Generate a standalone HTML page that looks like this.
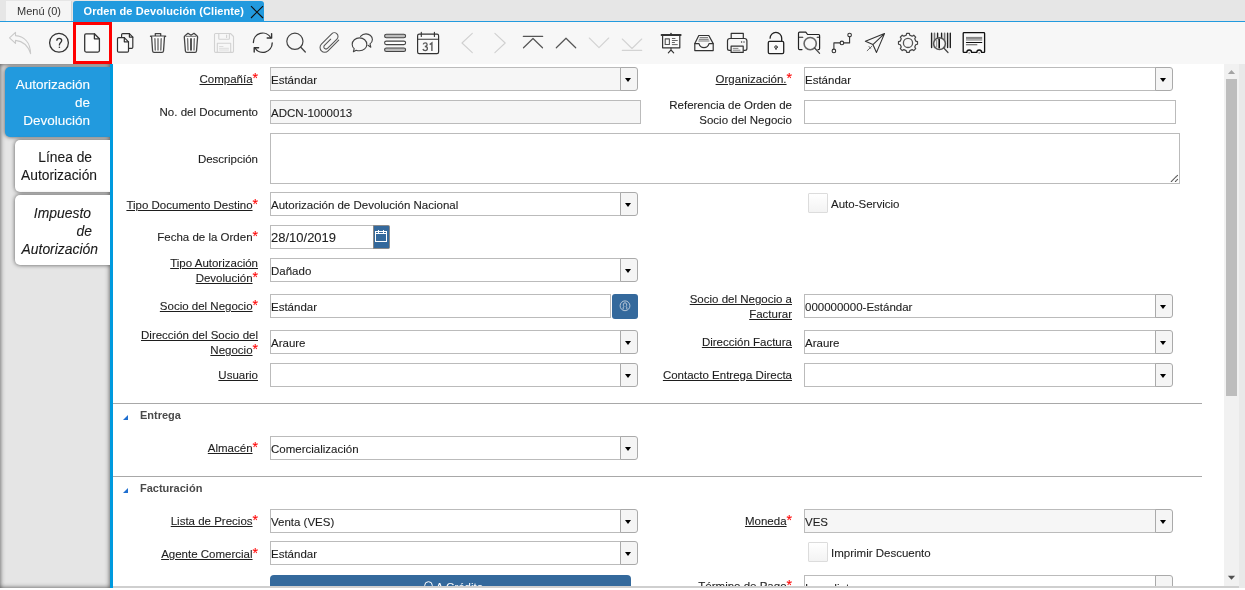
<!DOCTYPE html>
<html><head><meta charset="utf-8">
<style>
*{box-sizing:border-box}
html,body{margin:0;padding:0}
body{width:1245px;height:590px;position:relative;overflow:hidden;background:#fff;font-family:"Liberation Sans",sans-serif;color:#333}
.a{position:absolute}
#tabbar{left:0;top:0;width:1245px;height:21px;background:#e6e6e6}
#menutab{left:6px;top:1px;width:66px;height:20px;background:#f5f5f5;border-right:1px solid #d6d6d6;font-size:11px;color:#333;line-height:20px;padding-left:11px}
#acttab{left:73px;top:1px;width:191px;height:20px;background:#229ade;border-radius:3px 3px 0 0;font-size:11px;font-weight:bold;color:#fff;line-height:20px;padding-left:10.5px;letter-spacing:0.1px}
#blueline{left:0;top:21px;width:1245px;height:1px;background:#229ade}
#toolbar{left:0;top:22px;width:1245px;height:42px;background:#f7f7f7}
#redbox{left:73px;top:22px;width:39px;height:42px;border:3px solid #ff0000}
#leftp{left:0;top:64px;width:110px;height:524px;background:#e5e5e5;box-shadow:inset 0 0 5px #4a4a4a;overflow:hidden}
.ltab{position:absolute;border-radius:5px 0 0 5px;box-shadow:0 0 4px #555;font-size:13.5px;line-height:18px;-webkit-text-stroke:0.1px currentColor}
.ltab span{position:absolute;white-space:nowrap}
#vline{left:110px;top:64px;width:3px;height:524px;background:#009ade}
#bshadow{left:113px;top:586px;width:1126px;height:2px;background:#cfcfcf}
#sb{left:1224px;top:64px;width:15px;height:522px;background:#f1f1f1}
#sbr{left:1239px;top:64px;width:6px;height:524px;background:#e9e9e9}
#thumb{left:1226px;top:79px;width:11px;height:317px;background:#bdbdbd}
.lbl{position:absolute;white-space:nowrap;font-size:11.5px;color:#1e1e1e;-webkit-text-stroke:0.1px #1e1e1e;text-align:right;line-height:15px}
.u{text-decoration:underline;text-underline-offset:1px}
.req{color:#f00;-webkit-text-stroke:0.1px #f00;font-size:14px;position:relative;top:0;line-height:10px}
.fld{position:absolute;border:1px solid #bbb;background:#fff;font-size:11.5px;color:#1e1e1e;-webkit-text-stroke:0.1px #1e1e1e;padding-left:0px;white-space:nowrap;overflow:hidden}
.ro{background:#f6f6f6}
.btn{position:absolute;border:1px solid #aaa;border-left:1px solid #aaa;background:#f5f5f5;border-radius:0 3px 3px 0}
.btn i{position:absolute;left:4px;top:10px;width:0;height:0;border-left:3.5px solid transparent;border-right:3.5px solid transparent;border-top:4px solid #000}
.sep{position:absolute;height:1px;background:#a8a8a8}
.grp{position:absolute;font-size:11px;font-weight:bold;color:#4a4a4a}
.tri{position:absolute;width:0;height:0;border-left:5px solid transparent;border-bottom:5px solid #1f6fd0}
.chk{position:absolute;width:20px;height:20px;border:1px solid #dcdcdc;border-radius:1px;background:linear-gradient(#fff,#f3f3f3)}
</style></head><body>
<div id="root" style="position:absolute;left:0;top:0;width:1245px;height:590px;will-change:transform">
<div id="tabbar" class="a"></div>
<div id="menutab" class="a">Menú (0)</div>
<div id="acttab" class="a">Orden de Devolución (Cliente)</div>
<div id="blueline" class="a"></div>
<div id="toolbar" class="a"></div>
<svg class="a" style="left:0;top:0" width="1245" height="64" viewBox="0 0 1245 64">
<g fill="none" stroke-linecap="round" stroke-linejoin="round">
<!-- undo (disabled) -->
<path d="M9.5,37.8 L15.5,32.3 L15.5,35.6 C23.5,36.2 30.2,41.5 30.6,53.6 C28.2,46 22.5,41.2 15.5,40.4 L15.5,43.4 Z" stroke="#c9c9c9" stroke-width="1.1"/>
<!-- help -->
<circle cx="59" cy="42.8" r="9.4" stroke="#333" stroke-width="1.3"/>
<path d="M56.8,40.8 C56.8,39.1 57.9,38.4 59.2,38.4 C60.6,38.4 61.7,39.3 61.7,40.6 C61.7,42.4 59.4,42.7 59.4,44.9 L59.4,45.5" stroke="#333" stroke-width="1.3" stroke-linecap="butt"/>
<circle cx="59.4" cy="47.2" r="0.8" fill="#333"/>
<!-- new -->
<path d="M86,33.8 H94.4 L99.4,38.8 V50.6 Q99.4,52.1 97.9,52.1 H86.2 Q84.7,52.1 84.7,50.6 V35.2 Q84.7,33.8 86,33.8 Z" stroke="#333" stroke-width="1.3" fill="#fcfcfc"/>
<path d="M94.4,33.8 V38.8 H99.4" stroke="#333" stroke-width="1.3"/>
<!-- copy -->
<path d="M121.6,36.6 V34.8 Q121.6,33.7 122.7,33.7 H129.4 L132.8,37.1 V47.3 Q132.8,48.4 131.7,48.4 H129.2" stroke="#333" stroke-width="1.2"/>
<path d="M129.4,33.7 V37.1 H132.8" stroke="#333" stroke-width="1.2"/>
<path d="M118.7,37.6 H124.3 L128.5,41.8 V51 Q128.5,52.2 127.3,52.2 H118.7 Q117.5,52.2 117.5,51 V38.8 Q117.5,37.6 118.7,37.6 Z" stroke="#333" stroke-width="1.2" fill="#fcfcfc"/>
<path d="M124.3,37.6 V41.8 H128.5" stroke="#333" stroke-width="1.2"/>
<!-- trash -->
<path d="M150.5,36.3 H165.6" stroke="#444" stroke-width="1.4"/>
<path d="M155.3,36 V33.6 H160.7 V36" stroke="#444" stroke-width="1.3"/>
<path d="M151.6,36.6 L152.6,51 Q152.8,52.3 154,52.3 H162.1 Q163.3,52.3 163.5,51 L164.5,36.6" stroke="#444" stroke-width="1.3" fill="#fcfcfc"/>
<path d="M154.9,38.8 L155.3,50 M158,38.8 V50 M161.2,38.8 L160.8,50" stroke="#777" stroke-width="1.5"/>
<!-- trash 2 -->
<path d="M184.3,37 L185.4,51 Q185.6,52.3 186.8,52.3 H195.1 Q196.3,52.3 196.5,51 L197.6,37 Q197.6,36 196.6,35.6 L194,33.3 L191,35.3 L188,33.3 L185.3,35.6 Q184.3,36 184.3,37 Z" stroke="#444" stroke-width="1.3" fill="#fcfcfc"/>
<path d="M186,36.3 H196" stroke="#888" stroke-width="1.2"/>
<path d="M187.6,38.8 L188,50 M191,38.8 V50 M194.3,38.8 L194,50" stroke="#777" stroke-width="1.4"/>
<path d="M191,38.8 V50" stroke="#222" stroke-width="1.2"/>
<!-- save disabled -->
<path d="M215.6,33.5 H230.5 L233.5,36.5 V51.3 Q233.5,52.4 232.4,52.4 H215.6 Q214.5,52.4 214.5,51.3 V34.6 Q214.5,33.5 215.6,33.5 Z" stroke="#d2d2d2" stroke-width="1.1"/>
<path d="M218.8,33.5 V38.5 Q218.8,39.3 219.6,39.3 H228.6 Q229.4,39.3 229.4,38.5 V33.5 M226.6,35 V37.4" stroke="#d2d2d2" stroke-width="1.1"/>
<path d="M217.3,52.4 V43.3 H230.7 V52.4" stroke="#d2d2d2" stroke-width="1.1"/>
<path d="M219.5,46.5 H223 M219.5,48.3 H228.5 M219.5,50 H228.5" stroke="#dcdcdc" stroke-width="1"/>
<!-- refresh -->
<path d="M253.4,42.6 A9.3,9.3 0 0 1 270.8,37.8" stroke="#333" stroke-width="1.3"/>
<path d="M271.6,33.6 V38 H267.2" stroke="#333" stroke-width="1.4"/>
<path d="M272.2,43 A9.3,9.3 0 0 1 254.8,47.6" stroke="#333" stroke-width="1.3"/>
<path d="M254.2,52 V47.8 H258.6" stroke="#333" stroke-width="1.4"/>
<!-- search -->
<circle cx="294.9" cy="41.3" r="8.1" stroke="#444" stroke-width="1.2"/>
<path d="M300.8,47.2 L305.3,52" stroke="#444" stroke-width="1.3"/>
<!-- paperclip -->
<g transform="translate(328.8,42.4) rotate(45)"><path d="M5.4,-8.6 V6.45 A4.7,4.7 0 0 1 -4,6.45 V-8.1 A3.7,3.7 0 0 1 3.4,-8.1 V5.2 A2.15,2.15 0 0 1 -0.9,5.2 V-3.6" stroke="#555" stroke-width="1.05"/></g>
<!-- chat -->
<path d="M360.5,36.4 C362,34.7 364,33.9 366,33.9 C369.5,33.9 372.4,36.4 372.4,39.5 C372.4,41.3 371.5,42.8 370,43.9 L370.8,47.2 L368,45.3" stroke="#444" stroke-width="1.1"/>
<path d="M354.2,48.6 C352.8,47.4 352.2,46 352.2,44.4 C352.2,40.7 355.5,37.9 359.5,37.9 C363.6,37.9 366.8,40.7 366.8,44.4 C366.8,48 363.6,50.8 359.5,50.8 C358.3,50.8 357.2,50.6 356.2,50.2 L353.4,51.7 Z" stroke="#444" stroke-width="1.1" fill="#f9f9f9"/>
<!-- list -->
<rect x="384.6" y="34.3" width="21" height="3.5" rx="1.75" stroke="#444" stroke-width="1.1" fill="#bdbdbd"/>
<rect x="384.6" y="41.1" width="21" height="3.5" rx="1.75" stroke="#444" stroke-width="1.1" fill="#fff"/>
<rect x="384.6" y="48" width="21" height="3.5" rx="1.75" stroke="#444" stroke-width="1.1" fill="#bdbdbd"/>
<!-- calendar -->
<rect x="417.6" y="34.2" width="21" height="19.4" rx="1.6" stroke="#333" stroke-width="1.2" fill="#fafafa"/>
<path d="M417.6,39.2 H438.6" stroke="#333" stroke-width="1.1"/>
<path d="M421.3,32.2 V36.4 M434.4,32.2 V36.4" stroke="#333" stroke-width="1.1"/>
<!-- prev/next disabled -->
<path d="M472.3,33.3 L462,43 L472.3,52.6" stroke="#d0d0d0" stroke-width="1.1"/>
<path d="M494.9,33.3 L505.2,43 L494.9,52.6" stroke="#d0d0d0" stroke-width="1.1"/>
<!-- first -->
<path d="M523.3,36.3 H542.7" stroke="#555" stroke-width="1.2"/>
<path d="M523.5,47.8 L533,38.5 L542.5,47.8" stroke="#555" stroke-width="1.2"/>
<!-- up -->
<path d="M556.3,47.8 L566,38.2 L575.7,47.8" stroke="#555" stroke-width="1.2"/>
<!-- down disabled -->
<path d="M589.3,38 L599,47.6 L608.7,38" stroke="#d3d3d3" stroke-width="1.1"/>
<!-- last disabled -->
<path d="M622.3,39 L632,48.5 L641.7,39 M622.3,50.4 H641.7" stroke="#d3d3d3" stroke-width="1.1"/>
<!-- report -->
<path d="M661.6,35 H680.6" stroke="#333" stroke-width="2"/>
<circle cx="671" cy="33.6" r="0.8" fill="#333"/>
<path d="M662.6,36 V47.8 H679.8 V36" stroke="#333" stroke-width="1.2" fill="#fafafa"/>
<rect x="665.2" y="38.9" width="4.2" height="5.6" stroke="#555" stroke-width="1.1"/>
<path d="M672.3,38.5 H675 M672.3,40.5 H677.3 M672.3,42.5 H674.5 M672.3,44.6 H677.3" stroke="#555" stroke-width="0.9"/>
<path d="M671,48 V50 M671,50 L668.3,52.8 M671,50 L673.7,52.8" stroke="#333" stroke-width="1.1"/>
<!-- inbox -->
<path d="M694.8,43.6 L698.8,35.5 H708.8 L713.2,43.6" stroke="#333" stroke-width="1.2"/>
<path d="M694.8,43.6 V50.6 H713.2 V43.6 H709 Q708,47.6 704,47.6 Q700,47.6 699,43.6 Z" stroke="#333" stroke-width="1.2" fill="#fafafa"/>
<path d="M700,37.6 H707.6 M699.3,39.3 H708.3 M698.8,41 H709" stroke="#666" stroke-width="0.9"/>
<!-- printer -->
<path d="M731.2,38.4 V33.4 H743.3 V38.4" stroke="#333" stroke-width="1.2"/>
<path d="M730.6,50.4 H729.4 Q727.5,50.4 727.5,48.5 V40.8 Q727.5,38.5 729.8,38.5 H744.6 Q746.9,38.5 746.9,40.8 V48.5 Q746.9,50.4 745,50.4 H743.8" stroke="#333" stroke-width="1.2"/>
<rect x="731.1" y="46.2" width="12.1" height="6.2" stroke="#333" stroke-width="1.2" fill="#fafafa"/>
<path d="M733.2,48.4 H738 M733.2,50.2 H740" stroke="#777" stroke-width="0.9"/>
<circle cx="741.6" cy="42" r="0.7" fill="#333"/><circle cx="744" cy="42" r="0.7" fill="#333"/>
<!-- lock -->
<path d="M770.1,38.2 A5.8,5.8 0 0 1 781.7,38.2 V41.3" stroke="#222" stroke-width="1.3"/>
<rect x="768.3" y="41.4" width="15.4" height="12.2" rx="1.3" stroke="#222" stroke-width="1.3" fill="#fafafa"/>
<circle cx="776" cy="47.1" r="1.3" stroke="#333" stroke-width="1"/>
<path d="M776,48.4 V49.6" stroke="#333" stroke-width="1"/>
<!-- folder search -->
<path d="M802,49.6 H799.6 Q798.5,49.6 798.5,48.5 V33.2 Q798.5,32.2 799.5,32.2 H805.8 L807.6,34.5 H818.7 Q819.6,34.5 819.6,35.4 V48.5 Q819.6,49.6 818.5,49.6 H818" stroke="#222" stroke-width="1.2"/>
<path d="M798.5,37.2 H802.8 M817.2,37.2 H819.6" stroke="#222" stroke-width="1.1"/>
<circle cx="810.2" cy="43.6" r="6.1" stroke="#666" stroke-width="1.6" fill="#f7f7f7"/>
<path d="M814.6,48 L819.6,53.4" stroke="#444" stroke-width="1.2"/>
<!-- route -->
<path d="M833.9,49.1 V42.9 H840.1 M843.7,42.9 H849.6 V36.9" stroke="#333" stroke-width="1.1"/>
<circle cx="833.9" cy="50.9" r="1.8" stroke="#333" stroke-width="1.1"/>
<circle cx="841.9" cy="42.9" r="1.8" stroke="#333" stroke-width="1.1"/>
<circle cx="849.6" cy="35.1" r="1.8" stroke="#333" stroke-width="1.1"/>
<!-- send -->
<path d="M884.5,33.6 L865.4,41.3 L872.9,44.6 L876.5,52.4 Z M872.9,44.6 L884.5,33.6" stroke="#333" stroke-width="1.1"/>
<path d="M867.2,50.7 L872,46.1 M869,46.5 L870.5,48.3" stroke="#666" stroke-width="1"/>
<!-- gear -->
<path d="M906.16,35.22 L906.65,33.40 L909.35,33.40 L909.84,35.22 L912.13,36.16 L913.76,35.22 L915.68,37.14 L914.74,38.77 L915.68,41.06 L917.50,41.55 L917.50,44.25 L915.68,44.74 L914.74,47.03 L915.68,48.66 L913.76,50.58 L912.13,49.64 L909.84,50.58 L909.35,52.40 L906.65,52.40 L906.16,50.58 L903.87,49.64 L902.24,50.58 L900.32,48.66 L901.26,47.03 L900.32,44.74 L898.50,44.25 L898.50,41.55 L900.32,41.06 L901.26,38.77 L900.32,37.14 L902.24,35.22 L903.87,36.16 Z" stroke="#444" stroke-width="1.2"/>
<circle cx="908" cy="42.9" r="4.6" stroke="#555" stroke-width="1.3"/>
<!-- barcode search -->
<path d="M931.6,33.2 V47.5 M937.6,33.2 V47.5 M941.6,33.2 V47.5 M947.6,33.2 V47.5 M950.3,33.2 V47.5" stroke="#222" stroke-width="1.4"/>
<path d="M934.5,33.2 V47.5 M944.6,33.2 V47.5" stroke="#777" stroke-width="1.6"/>
<circle cx="939.5" cy="43.6" r="5.9" stroke="#555" stroke-width="1.5" fill="#f4f4f4"/>
<path d="M939.2,39.3 V47.8" stroke="#111" stroke-width="1.6"/>
<path d="M936.6,40 V47" stroke="#999" stroke-width="1.2"/>
<path d="M943.8,48 L948,52.5" stroke="#444" stroke-width="1.2"/>
<!-- receipt -->
<path d="M964,32.7 H983.8 Q984.6,32.7 984.6,33.5 V51.8 Q984.6,52.4 984,52.4 H981.6 A2.4,2.4 0 0 0 976.8,52.4 H971.6 A2.4,2.4 0 0 0 966.8,52.4 H963.8 Q963.2,52.4 963.2,51.8 V33.5 Q963.2,32.7 964,32.7 Z" stroke="#111" stroke-width="1.3" fill="#fafafa"/>
<circle cx="969.2" cy="53" r="0.8" fill="#888"/><circle cx="979.2" cy="53" r="0.8" fill="#888"/>
<path d="M966.4,37.4 H981.8 M966.4,38.7 H981.8 M966.4,40 H981.8" stroke="#777" stroke-width="1"/>
<path d="M966.4,42.5 H981.8" stroke="#111" stroke-width="1.1"/>
<path d="M966.4,44.8 H976.9" stroke="#555" stroke-width="1.1"/>
</g>
<path d="M423.2,44.4 Q423.6,42.8 425.3,42.8 Q427.1,42.8 427.1,44.6 Q427.1,46.5 424.8,46.5 M424.8,46.5 Q427.4,46.5 427.4,48.6 Q427.4,50.6 425.2,50.6 Q423.3,50.6 422.9,49" fill="none" stroke="#5a5a5a" stroke-width="1.3"/><path d="M429.7,44.6 L431.9,42.9 V50.9" fill="none" stroke="#5a5a5a" stroke-width="1.4"/>
<!-- close X -->
<path d="M251,6.2 L263,18 M263,6.2 L251,18" stroke="#111" stroke-width="1.1" fill="none"/>
</svg>

<div id="redbox" class="a"></div>
<div id="leftp" class="a"><div class="ltab" style="left:5px;top:3px;width:120px;height:70px;background:#229ade;color:#fff"><span style="right:35px;top:9px">Autorización</span><span style="right:35px;top:27px">de</span><span style="right:35px;top:45px">Devolución</span></div><div class="ltab" style="left:15px;top:76px;width:110px;height:52px;background:#fff;color:#1a1a1a;font-size:13.8px"><span style="right:33px;top:9px">Línea de</span><span style="right:28px;top:27px">Autorización</span></div><div class="ltab" style="left:15px;top:131px;width:110px;height:70px;background:#fff;color:#1a1a1a;font-style:italic;font-size:13.9px"><span style="right:34px;top:9px">Impuesto</span><span style="right:33px;top:27px">de</span><span style="right:27px;top:45px">Autorización</span></div></div>
<div id="vline" class="a"></div>
<div class="lbl" style="right:987px;top:71.8px"><span class="u">Compañía</span><span class="req">*</span></div>
<div class="fld ro" style="left:270px;top:67px;width:351px;height:24px;line-height:25px;">Estándar</div><div class="btn" style="left:620px;top:67px;width:18px;height:24px"><i></i></div>
<div class="lbl" style="right:453px;top:71.8px"><span class="u">Organización.</span><span class="req">*</span></div>
<div class="fld" style="left:804px;top:67px;width:352px;height:24px;line-height:25px;">Estándar</div><div class="btn" style="left:1155px;top:67px;width:18px;height:24px"><i></i></div>
<div class="lbl" style="right:987px;top:104.7px">No. del Documento</div>
<div class="fld ro" style="left:270px;top:100px;width:371px;height:24px;line-height:25px;">ADCN-1000013</div>
<div class="lbl" style="right:453px;top:97.7px">Referencia de Orden de<br>Socio del Negocio</div>
<div class="fld" style="left:804px;top:100px;width:372px;height:24px;line-height:25px;"></div>
<div class="lbl" style="right:987px;top:151.7px">Descripción</div>
<div class="fld" style="left:270px;top:133px;width:910px;height:51px;line-height:52px;"></div>
<div class="lbl" style="right:987px;top:197.7px"><span class="u">Tipo Documento Destino</span><span class="req">*</span></div>
<div class="fld" style="left:270px;top:192px;width:351px;height:24px;line-height:25px;">Autorización de Devolución Nacional</div><div class="btn" style="left:620px;top:192px;width:18px;height:24px"><i></i></div>
<div class="chk" style="left:808px;top:193px"></div>
<div class="lbl" style="left:831px;top:197px;text-align:left">Auto-Servicio</div>
<div class="lbl" style="right:987px;top:229.7px">Fecha de la Orden<span class="req">*</span></div>
<div class="fld" style="left:270px;top:225px;width:104px;height:24px;line-height:25px;font-size:13px;line-height:23px">28/10/2019</div>
<div class="a" style="left:373px;top:225px;width:17px;height:24px;background:#34699c;border:1px solid #8a8a8a;border-left-color:#888;border-radius:0 2px 2px 0"></div>
<svg class="a" style="left:373px;top:225px" width="17" height="24"><g fill="none" stroke="#fff" stroke-width="1"><rect x="2.5" y="6.5" width="11" height="10"/><path d="M2.5,8.5 H13.5"/><path d="M5.5,5 V8 M10.5,5 V8"/></g></svg>
<div class="lbl" style="right:987px;top:255.7px"><span class="u">Tipo Autorización</span><br><span class="u">Devolución</span><span class="req">*</span></div>
<div class="fld" style="left:270px;top:258px;width:351px;height:24px;line-height:25px;">Dañado</div><div class="btn" style="left:620px;top:258px;width:18px;height:24px"><i></i></div>
<div class="lbl" style="right:987px;top:299.0px"><span class="u">Socio del Negocio</span><span class="req">*</span></div>
<div class="fld" style="left:270px;top:294px;width:341px;height:24px;line-height:25px;">Estándar</div>
<div class="a" style="left:612px;top:294px;width:26px;height:25px;background:#34699c;border-radius:3px"></div>
<svg class="a" style="left:612px;top:294px" width="26" height="25"><g fill="none" stroke="#c5d0de" stroke-width="0.9"><circle cx="13" cy="11.8" r="4.9"/><path d="M11.2,15.4 V13.6 Q11.2,12.9 12,12.6 Q11,11.6 11.4,10.1 Q12,8.7 13,8.7 Q14,8.7 14.6,10.1 Q15,11.6 14,12.6 Q14.8,12.9 14.8,13.6 V15.4"/></g></svg>
<div class="lbl" style="right:453px;top:292.2px"><span class="u">Socio del Negocio a</span><br><span class="u">Facturar</span></div>
<div class="fld" style="left:804px;top:294px;width:352px;height:24px;line-height:25px;">000000000-Estándar</div><div class="btn" style="left:1155px;top:294px;width:18px;height:24px"><i></i></div>
<div class="lbl" style="right:987px;top:328.1px"><span class="u">Dirección del Socio del</span><br><span class="u">Negocio</span><span class="req">*</span></div>
<div class="fld" style="left:270px;top:330px;width:351px;height:24px;line-height:25px;">Araure</div><div class="btn" style="left:620px;top:330px;width:18px;height:24px"><i></i></div>
<div class="lbl" style="right:453px;top:334.7px"><span class="u">Dirección Factura</span></div>
<div class="fld" style="left:804px;top:330px;width:352px;height:24px;line-height:25px;">Araure</div><div class="btn" style="left:1155px;top:330px;width:18px;height:24px"><i></i></div>
<div class="lbl" style="right:987px;top:367.7px"><span class="u">Usuario</span></div>
<div class="fld" style="left:270px;top:363px;width:351px;height:24px;line-height:25px;"></div><div class="btn" style="left:620px;top:363px;width:18px;height:24px"><i></i></div>
<div class="lbl" style="right:453px;top:367.7px"><span class="u">Contacto Entrega Directa</span></div>
<div class="fld" style="left:804px;top:363px;width:352px;height:24px;line-height:25px;"></div><div class="btn" style="left:1155px;top:363px;width:18px;height:24px"><i></i></div>
<div class="sep" style="left:113px;top:403px;width:1089px"></div>
<div class="tri" style="left:123px;top:415px"></div>
<div class="grp" style="left:140px;top:409px">Entrega</div>
<div class="lbl" style="right:987px;top:440.7px"><span class="u">Almacén</span><span class="req">*</span></div>
<div class="fld" style="left:270px;top:436px;width:351px;height:24px;line-height:25px;">Comercialización</div><div class="btn" style="left:620px;top:436px;width:18px;height:24px"><i></i></div>
<div class="sep" style="left:113px;top:476px;width:1089px"></div>
<div class="tri" style="left:123px;top:488px"></div>
<div class="grp" style="left:140px;top:482px">Facturación</div>
<div class="lbl" style="right:987px;top:513.7px"><span class="u">Lista de Precios</span><span class="req">*</span></div>
<div class="fld" style="left:270px;top:509px;width:351px;height:24px;line-height:25px;">Venta (VES)</div><div class="btn" style="left:620px;top:509px;width:18px;height:24px"><i></i></div>
<div class="lbl" style="right:453px;top:513.7px"><span class="u">Moneda</span><span class="req">*</span></div>
<div class="fld ro" style="left:804px;top:509px;width:352px;height:24px;line-height:25px;">VES</div><div class="btn" style="left:1155px;top:509px;width:18px;height:24px"><i></i></div>
<div class="lbl" style="right:987px;top:547.0px"><span class="u">Agente Comercial</span><span class="req">*</span></div>
<div class="fld" style="left:270px;top:541px;width:351px;height:24px;line-height:25px;">Estándar</div><div class="btn" style="left:620px;top:541px;width:18px;height:24px"><i></i></div>
<div class="chk" style="left:808px;top:542px"></div>
<div class="lbl" style="left:831px;top:546px;text-align:left">Imprimir Descuento</div>
<div class="a" style="left:270px;top:575px;width:361px;height:24px;background:#34699c;border-radius:4px;color:#fff;font-size:11.5px;line-height:14px;padding-top:4.5px;padding-left:6px;text-align:center;white-space:nowrap"><svg width="9" height="9" style="vertical-align:1px;margin-right:3px"><circle cx="4.5" cy="4.5" r="3.8" fill="none" stroke="#fff" stroke-width="1"/></svg>A Crédito</div>
<div class="lbl" style="right:453px;top:578.7px"><span class="u">Término de Pago</span><span class="req">*</span></div>
<div class="fld" style="left:804px;top:575px;width:352px;height:24px;line-height:25px;">Inmediato</div><div class="btn" style="left:1155px;top:575px;width:18px;height:24px"><i></i></div>
<div class="a" style="left:113px;top:586px;width:1132px;height:4px;background:#fff"></div>
<div id="bshadow" class="a"></div>
<div id="sb" class="a"></div>
<div id="sbr" class="a"></div>
<div id="thumb" class="a"></div>
<svg class="a" style="left:1224px;top:64px" width="15" height="522"><path d="M3.9,10 L7.5,6 L11.1,10 Z" fill="#a3a3a3"/><path d="M3.9,511.8 L7.5,515.8 L11.1,511.8 Z" fill="#505050"/></svg>
<svg class="a" style="left:1168px;top:172px" width="12" height="12"><g stroke="#555" stroke-width="1.1" stroke-dasharray="1 1" stroke-linecap="round"><path d="M3.3,9.5 L9.5,3.3"/><path d="M7.4,9.5 L9.5,7.4"/></g></svg>
</div></body></html>
